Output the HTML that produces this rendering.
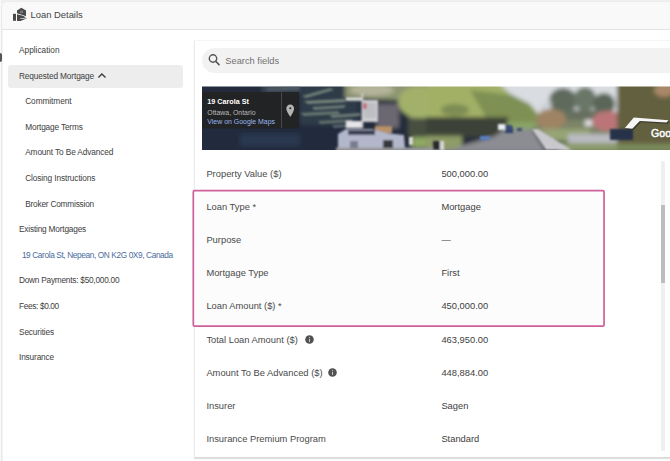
<!DOCTYPE html>
<html><head><meta charset="utf-8"><style>
html,body{margin:0;padding:0;}
body{width:670px;height:461px;overflow:hidden;position:relative;background:#fff;font-family:"Liberation Sans",sans-serif;}
.t{position:absolute;white-space:nowrap;}
.a{position:absolute;}
</style></head><body>
<div class="a" style="left:0;top:0;width:670px;height:3px;background:#efefef"></div>
<div class="a" style="left:0;top:0;width:1px;height:461px;background:#f9f9f9"></div>
<div class="a" style="left:1px;top:1px;width:700px;height:480px;border:1px solid #e8e8e8;border-top-color:#ededed;border-radius:6px;background:#fff;overflow:hidden;box-shadow:inset 1px 0 0 #f3f3f3"><div style="height:27px;background:#f9f9f9;border-bottom:1px solid #e3e3e3"></div></div>
<div class="a" style="left:0;top:53px;width:2px;height:9px;background:#555;border-radius:0 5px 5px 0"></div>
<!-- highlight -->
<div class="a" style="left:8px;top:65px;width:175px;height:23px;background:#ededed;border-radius:3px"></div>
<svg class="a" style="left:97px;top:72px" width="11" height="7" viewBox="0 0 11 7"><path d="M1.4 5.4 L4.9 1.9 L8.5 5.4" fill="none" stroke="#3c3c3c" stroke-width="1.35"/></svg>
<!-- panel -->
<div class="a" style="left:194px;top:40px;width:500px;height:416px;border:1px solid #ebebeb;border-top-color:#f5f5f5;border-bottom-color:#dadada;box-shadow:0 1px 1px rgba(0,0,0,0.12);background:#fff"></div>
<div class="a" style="left:202px;top:47.5px;width:520px;height:25.5px;border-radius:13px;background:#f2f2f2"></div>
<svg class="a" style="left:207.2px;top:53.2px" width="14" height="13" viewBox="0 0 14 13"><circle cx="6" cy="5.5" r="3.7" fill="none" stroke="#555" stroke-width="1.4"/><path d="M8.7 8.2 L12 11.6" stroke="#555" stroke-width="1.6" stroke-linecap="round"/></svg>
<div class="t" style="left:225.3px;top:56.1px;font-size:9.3px;line-height:11px;color:#717171">Search fields</div>
<!-- street view -->
<svg class="a" style="left:202px;top:86px" width="468" height="64" viewBox="0 0 468 64">
<defs>
<filter id="bl" x="-10%" y="-30%" width="120%" height="160%"><feGaussianBlur stdDeviation="2"/></filter>
<filter id="bl1" x="-10%" y="-30%" width="120%" height="160%"><feGaussianBlur stdDeviation="0.8"/></filter>
<filter id="nz" x="0" y="0" width="100%" height="100%"><feTurbulence type="fractalNoise" baseFrequency="0.45" numOctaves="2" seed="7"/><feColorMatrix type="matrix" values="0.33 0.33 0.33 0 0  0.33 0.33 0.33 0 0  0.33 0.33 0.33 0 0  0 0 0 0 1"/></filter>
<clipPath id="cp"><rect x="0" y="0.6" width="468" height="63.4"/></clipPath>
</defs>
<g clip-path="url(#cp)">
<g filter="url(#bl)">
<path d="M-12.0 -6.0 L478.0 -6.0 L478.0 74.0 L-12.0 74.0 Z" fill="#212a3b"/>
<path d="M60.0 -6.0 L98.0 -6.0 L98.0 7.0 L60.0 7.0 Z" fill="#3a4552"/>
<path d="M98.0 -2.0 L156.0 -2.0 L156.0 39.0 L98.0 39.0 Z" fill="#2f3a4a"/>
<path d="M-12.0 42.0 L138.0 42.0 L138.0 69.0 L-12.0 69.0 Z" fill="#222b3d"/>
<path d="M38.0 48.0 L98.0 48.0 L98.0 60.0 L38.0 60.0 Z" fill="#2c3850"/>
<path d="M143.0 -6.0 L243.0 -6.0 L243.0 32.0 L208.0 32.0 L198.0 14.0 L143.0 12.0 Z" fill="#8e9672"/>
<ellipse cx="170.0" cy="4.0" rx="22" ry="6" fill="#b4b49a"/>
<ellipse cx="218.0" cy="16.0" rx="22" ry="16" fill="#a2b06a"/>
<path d="M175.0 18.0 L197.0 18.0 L197.0 42.0 L175.0 42.0 Z" fill="#6c6872"/>
<path d="M206.0 32.0 L238.0 32.0 L238.0 50.0 L206.0 50.0 Z" fill="#4a5040"/>
<path d="M210.0 51.0 L238.0 51.0 L238.0 62.0 L210.0 62.0 Z" fill="#8fa862"/>
<path d="M226.0 -6.0 L293.0 -6.0 L308.0 8.0 L328.0 18.0 L336.0 26.0 L336.0 38.0 L226.0 34.0 Z" fill="#a2b066"/>
<path d="M268.0 4.0 L318.0 10.0 L334.0 26.0 L334.0 40.0 L288.0 38.0 Z" fill="#7e9052"/>
<ellipse cx="253.0" cy="24.0" rx="14" ry="6" fill="#7d8c52"/>
<path d="M224.0 31.0 L306.0 31.0 L306.0 51.0 L224.0 51.0 Z" fill="#3c4238"/>
<path d="M293.0 -6.0 L478.0 -6.0 L478.0 0.0 L418.0 0.0 L418.0 30.0 L338.0 30.0 L328.0 18.0 L308.0 8.0 Z" fill="#d9dde1"/>
<path d="M305.0 36.0 L334.0 36.0 L334.0 43.0 L305.0 43.0 Z" fill="#8aa466"/>
<path d="M224.0 50.0 L260.0 50.0 L260.0 64.0 L224.0 64.0 Z" fill="#8e9c66"/>
<path d="M238.0 66.0 L293.0 50.0 L303.0 43.0 L330.0 43.0 L344.0 66.0 Z" fill="#8c8d92"/>
<path d="M334.0 28.0 L418.0 28.0 L418.0 48.0 L334.0 48.0 Z" fill="#7d8468"/>
<ellipse cx="361.0" cy="15.0" rx="14" ry="13" fill="#5f6b5c"/>
<ellipse cx="383.0" cy="13.0" rx="11" ry="12" fill="#6b7768"/>
<ellipse cx="402.0" cy="18.0" rx="11" ry="11" fill="#5a6658"/>
<path d="M354.0 24.0 L410.0 24.0 L410.0 34.0 L354.0 34.0 Z" fill="#66705f"/>
<path d="M338.0 18.0 L350.0 14.0 L350.0 30.0 L338.0 30.0 Z" fill="#c8ccd0" opacity="0.6"/>
<ellipse cx="349.0" cy="33.0" rx="15" ry="10" fill="#9e8464"/>
<ellipse cx="406.0" cy="35.0" rx="16" ry="10" fill="#bb7478"/>
<path d="M336.0 43.0 L388.0 43.0 L388.0 55.0 L348.0 55.0 Z" fill="#97a476"/>
<path d="M383.0 34.0 L390.0 34.0 L390.0 40.0 L383.0 40.0 Z" fill="#e2e2e4"/>
<path d="M366.0 48.0 L420.0 48.0 L420.0 59.0 L366.0 59.0 Z" fill="#babbc2"/>
<path d="M358.0 57.0 L423.0 57.0 L423.0 66.0 L358.0 66.0 Z" fill="#8c9a6c"/>
<path d="M415.0 -6.0 L478.0 -6.0 L478.0 60.0 L415.0 60.0 Z" fill="#63613f"/>
<ellipse cx="462.0" cy="4.0" rx="10" ry="7" fill="#a88868"/>
<path d="M415.0 58.0 L478.0 58.0 L478.0 66.0 L415.0 66.0 Z" fill="#7b8a5c"/>
</g>
<g filter="url(#bl1)">
<path d="M100.0 10.0 L128.0 2.0 L132.0 4.0 L104.0 12.0 Z" fill="#6e7e76"/>
<path d="M102.0 15.0 L142.0 13.0 L144.0 16.0 L106.0 18.0 Z" fill="#76857a"/>
<path d="M110.0 21.0 L144.0 19.0 L142.0 22.0 L112.0 24.0 Z" fill="#6c7a74"/>
<path d="M98.0 27.0 L136.0 25.0 L138.0 28.0 L102.0 30.0 Z" fill="#66766e"/>
<path d="M128.0 29.0 L158.0 27.0 L158.0 30.0 L130.0 32.0 Z" fill="#6c7a76"/>
<path d="M116.0 35.0 L150.0 33.0 L150.0 36.0 L118.0 38.0 Z" fill="#606e6a"/>
<path d="M130.0 39.0 L148.0 38.0 L148.0 41.0 L132.0 42.0 Z" fill="#56646a"/>
<path d="M64.0 2.0 L96.0 0.0 L98.0 4.0 L66.0 5.0 Z" fill="#4e5a64"/>
<path d="M144.0 11.5 L160.0 11.5 L160.0 14.5 L144.0 14.5 Z" fill="#e6e6e8"/>
<path d="M160.0 14.0 L176.0 14.0 L176.0 36.0 L160.0 36.0 Z" fill="#cdced2"/>
<path d="M162.0 17.0 L174.0 17.0 L174.0 32.0 L162.0 32.0 Z" fill="#b8b8be" opacity="0.7"/>
<path d="M144.0 35.0 L160.0 35.0 L160.0 42.0 L144.0 42.0 Z" fill="#e4e4e6"/>
<path d="M159.5 7.0 L161.2 7.0 L161.2 42.0 L159.5 42.0 Z" fill="#cfcfcf"/>
<path d="M161.0 17.0 L164.5 17.0 L164.5 23.0 L161.0 23.0 Z" fill="#c46575"/>
<path d="M173.0 40.0 L190.0 40.0 L190.0 47.0 L173.0 47.0 Z" fill="#b8926a"/>
<path d="M136.0 48.0 L144.0 43.0 L170.0 43.0 L184.0 47.0 L202.0 49.0 L203.0 62.0 L136.0 62.0 Z" fill="#b2b7cb"/>
<path d="M134.0 61.5 L243.0 61.5 L243.0 65.0 L134.0 65.0 Z" fill="#9c9ca0"/>
<path d="M146.0 44.0 L173.0 44.0 L173.0 49.0 L146.0 49.0 Z" fill="#3b4152"/>
<path d="M181.0 54.0 L191.0 54.0 L191.0 62.0 L181.0 62.0 Z" fill="#35373e"/>
<path d="M148.0 55.0 L156.0 55.0 L156.0 62.0 L148.0 62.0 Z" fill="#404450" opacity="0.5"/>
<path d="M207.0 51.0 L211.0 51.0 L211.0 59.0 L207.0 59.0 Z" fill="#dedede"/>
<path d="M231.0 55.0 L238.0 55.0 L238.0 64.0 L231.0 64.0 Z" fill="#2c2c2e"/>
<path d="M238.0 55.0 L242.0 55.0 L242.0 64.0 L238.0 64.0 Z" fill="#d8d8d8"/>
<path d="M278.0 50.0 L288.0 50.0 L288.0 54.0 L278.0 54.0 Z" fill="#5a80c4"/>
<path d="M303.0 41.0 L311.0 41.0 L311.0 47.0 L303.0 47.0 Z" fill="#2c3b66"/>
<path d="M315.0 42.0 L320.0 42.0 L320.0 45.0 L315.0 45.0 Z" fill="#3a4a70"/>
<path d="M408.0 43.0 L431.0 43.0 L431.0 54.0 L408.0 54.0 Z" fill="#28314a"/>
<path d="M296.0 38.0 L303.0 38.0 L303.0 44.0 L296.0 44.0 Z" fill="#e8eef4"/>
<path d="M330.0 43.0 L336.0 43.0 L370.0 64.0 L344.0 64.0 Z" fill="#c9c9cd"/>
<path d="M303.0 39.0 L310.0 39.0 L310.0 45.0 L303.0 45.0 Z" fill="#3a4a76"/>
</g>

</g>
<path d="M423.9 43.3 L432.8 32.9 L467.5 35.5 L465.6 37.7 L438.8 36.3 L431.3 44.1 Z" fill="#1a1a1a" opacity="0.55"/>
<path d="M422.9 42 L431.8 31.6 L466.5 34.2 L464.6 36.4 L437.8 35 L430.3 42.8 Z" fill="#f6f6f6"/>
<text x="449" y="51" font-family="Liberation Sans" font-size="10.6" fill="#fff" stroke="#fff" stroke-width="0.45">Goog</text>
<rect x="0" y="6" width="97.1" height="36.4" fill="#222" opacity="0.9"/>
<rect x="79" y="6.5" width="0.7" height="35.5" fill="#5a5a5a"/>
<path d="M88.3 18.5 C86 18.5 84.3 20.3 84.3 22.5 C84.3 25.3 88.3 31 88.3 31 C88.3 31 92.1 25.3 92.1 22.5 C92.1 20.3 90.4 18.5 88.3 18.5 Z M88.3 21.3 A1 1 0 1 0 88.3 23.3 A1 1 0 1 0 88.3 21.3 Z" fill="#b4b4b4" fill-rule="evenodd"/>
<text x="5.3" y="18.1" font-family="Liberation Sans" font-size="7.2" font-weight="700" fill="#fff">19 Carola St</text>
<text x="5.3" y="28.5" font-family="Liberation Sans" font-size="6.9" fill="#bbb">Ottawa, Ontario</text>
<text x="5.3" y="38" font-family="Liberation Sans" font-size="6.95" fill="#9ab8ee">View on Google Maps</text>
</svg>

<!-- pink box -->
<svg class="a" style="left:190px;top:187px" width="420" height="145"><rect x="3.3" y="3.7" width="410.75" height="135.5" rx="1.2" fill="#fcfcfc" stroke="#cf5f9b" stroke-width="1.7"/></svg>
<!-- scrollbar -->
<div class="a" style="left:661px;top:161px;width:4px;height:290px;background:#efefef"></div>
<div class="a" style="left:661px;top:205px;width:4px;height:78px;background:#bdbdbd"></div>
<!-- info icons -->
<svg class="a" style="left:304.8px;top:335px" width="9" height="9" viewBox="0 0 9 9"><circle cx="4.5" cy="4.5" r="4.3" fill="#525252"/><rect x="4.05" y="3.9" width="0.95" height="3" fill="#d0d0d0"/><circle cx="4.52" cy="2.6" r="0.6" fill="#d0d0d0"/></svg>
<svg class="a" style="left:327.9px;top:368px" width="9" height="9" viewBox="0 0 9 9"><circle cx="4.5" cy="4.5" r="4.3" fill="#525252"/><rect x="4.05" y="3.9" width="0.95" height="3" fill="#d0d0d0"/><circle cx="4.52" cy="2.6" r="0.6" fill="#d0d0d0"/></svg>
<!-- logo -->
<svg class="a" style="left:10px;top:5px" width="20" height="18" viewBox="0 0 20 18"><rect x="3" y="8.8" width="3" height="7" fill="#4a4a4a"/><path d="M7 5.5 L11.3 2.8 L16 5.5 L16 11.3 L13.5 10.3 L7 8.3 Z" fill="#4a4a4a"/><rect x="10" y="5.6" width="3" height="2.4" fill="#7a7a7a"/><path d="M7 9.3 L13 10.8 L16 12.5 L10 13.5 L10 14 L17.3 13.3 L10.5 16 L7 16 Z" fill="#4a4a4a"/></svg>
<div class="t" style="left:30.60px;top:9px;font-size:9.4px;line-height:12px;color:#444;font-weight:400;">Loan Details</div>
<div class="t" style="left:19.00px;top:44px;font-size:8.3px;line-height:12px;color:#404040;font-weight:400;letter-spacing:0px">Application</div>
<div class="t" style="left:19.00px;top:70px;font-size:8.3px;line-height:12px;color:#404040;font-weight:400;letter-spacing:-0.135px">Requested Mortgage</div>
<div class="t" style="left:25.20px;top:95px;font-size:8.3px;line-height:12px;color:#404040;font-weight:400;letter-spacing:-0.067px">Commitment</div>
<div class="t" style="left:25.20px;top:121px;font-size:8.3px;line-height:12px;color:#404040;font-weight:400;letter-spacing:-0.162px">Mortgage Terms</div>
<div class="t" style="left:25.20px;top:146px;font-size:8.3px;line-height:12px;color:#404040;font-weight:400;letter-spacing:-0.125px">Amount To Be Advanced</div>
<div class="t" style="left:25.20px;top:172px;font-size:8.3px;line-height:12px;color:#404040;font-weight:400;letter-spacing:-0.111px">Closing Instructions</div>
<div class="t" style="left:25.20px;top:198px;font-size:8.3px;line-height:12px;color:#404040;font-weight:400;letter-spacing:-0.213px">Broker Commission</div>
<div class="t" style="left:19.00px;top:223px;font-size:8.3px;line-height:12px;color:#404040;font-weight:400;letter-spacing:-0.194px">Existing Mortgages</div>
<div class="t" style="left:21.90px;top:249px;font-size:8.3px;line-height:12px;color:#4a6c9c;font-weight:400;letter-spacing:-0.39px">19 Carola St, Nepean, ON K2G 0X9, Canada</div>
<div class="t" style="left:19.00px;top:274px;font-size:8.3px;line-height:12px;color:#404040;font-weight:400;letter-spacing:-0.25px">Down Payments: $50,000.00</div>
<div class="t" style="left:19.00px;top:300px;font-size:8.3px;line-height:12px;color:#404040;font-weight:400;letter-spacing:-0.36px">Fees: $0.00</div>
<div class="t" style="left:19.00px;top:326px;font-size:8.3px;line-height:12px;color:#404040;font-weight:400;letter-spacing:-0.144px">Securities</div>
<div class="t" style="left:19.00px;top:351px;font-size:8.3px;line-height:12px;color:#404040;font-weight:400;letter-spacing:-0.162px">Insurance</div>
<div class="t" style="left:206.40px;top:168px;font-size:9.35px;line-height:12px;color:#4a4a4a;font-weight:400;">Property Value ($)</div>
<div class="t" style="left:441.40px;top:168px;font-size:9.35px;line-height:12px;color:#3e3e3e;font-weight:400;">500,000.00</div>
<div class="t" style="left:206.40px;top:201px;font-size:9.35px;line-height:12px;color:#4a4a4a;font-weight:400;">Loan Type *</div>
<div class="t" style="left:441.40px;top:201px;font-size:9.35px;line-height:12px;color:#3e3e3e;font-weight:400;">Mortgage</div>
<div class="t" style="left:206.40px;top:234px;font-size:9.35px;line-height:12px;color:#4a4a4a;font-weight:400;">Purpose</div>
<div class="t" style="left:441.40px;top:234px;font-size:9.35px;line-height:12px;color:#3e3e3e;font-weight:400;">—</div>
<div class="t" style="left:206.40px;top:267px;font-size:9.35px;line-height:12px;color:#4a4a4a;font-weight:400;">Mortgage Type</div>
<div class="t" style="left:441.40px;top:267px;font-size:9.35px;line-height:12px;color:#3e3e3e;font-weight:400;">First</div>
<div class="t" style="left:206.40px;top:300px;font-size:9.35px;line-height:12px;color:#4a4a4a;font-weight:400;">Loan Amount ($) *</div>
<div class="t" style="left:441.40px;top:300px;font-size:9.35px;line-height:12px;color:#3e3e3e;font-weight:400;">450,000.00</div>
<div class="t" style="left:206.40px;top:334px;font-size:9.35px;line-height:12px;color:#4a4a4a;font-weight:400;">Total Loan Amount ($)</div>
<div class="t" style="left:441.40px;top:334px;font-size:9.35px;line-height:12px;color:#3e3e3e;font-weight:400;">463,950.00</div>
<div class="t" style="left:206.40px;top:367px;font-size:9.35px;line-height:12px;color:#4a4a4a;font-weight:400;">Amount To Be Advanced ($)</div>
<div class="t" style="left:441.40px;top:367px;font-size:9.35px;line-height:12px;color:#3e3e3e;font-weight:400;">448,884.00</div>
<div class="t" style="left:206.40px;top:400px;font-size:9.35px;line-height:12px;color:#4a4a4a;font-weight:400;">Insurer</div>
<div class="t" style="left:441.40px;top:400px;font-size:9.35px;line-height:12px;color:#3e3e3e;font-weight:400;">Sagen</div>
<div class="t" style="left:206.40px;top:433px;font-size:9.35px;line-height:12px;color:#4a4a4a;font-weight:400;">Insurance Premium Program</div>
<div class="t" style="left:441.40px;top:433px;font-size:9.35px;line-height:12px;color:#3e3e3e;font-weight:400;">Standard</div>

</body></html>
